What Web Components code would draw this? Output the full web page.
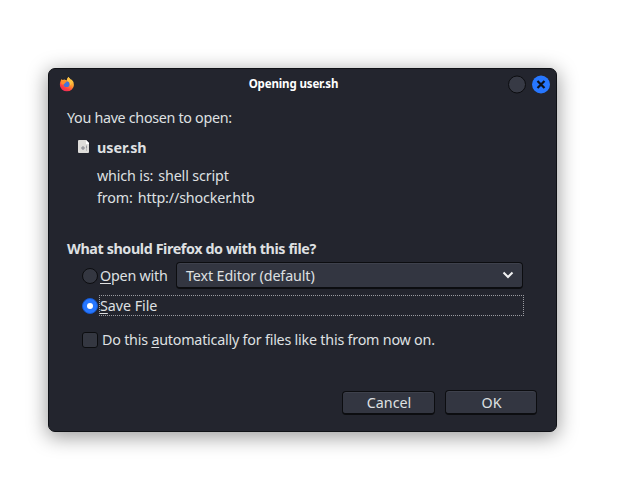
<!DOCTYPE html>
<html lang="en"><head><meta charset="utf-8"><title>Opening user.sh</title>
<style>
body{margin:0;width:625px;height:496px;overflow:hidden;background:#fff;font:14.3px/20px "Noto Sans","Open Sans",sans-serif;color:#dfe0e2}
dialog-window{margin:68px 0 0 48px}
</style></head><body>
<dialog-window heading="Opening user.sh">
<file-info name="user.sh" kind="shell script" source="http://shocker.htb"></file-info>
<open-choices></open-choices>
<dialog-actions></dialog-actions>
</dialog-window>
<script>
const define=(name,html)=>customElements.define(name,class extends HTMLElement{
 constructor(){super();const r=this.attachShadow({mode:"open"});
 r.innerHTML=html.replace(/\{\{([\w-]+)\}\}/g,(_,k)=>this.getAttribute(k)||"");}
});
define("firefox-icon",`<style>:host{display:block;width:16px;height:16px}svg{display:block}</style>
<svg width="16" height="16" viewBox="0 0 16 16"><defs><linearGradient id="f" x1=".85" y1=".05" x2=".3" y2="1"><stop stop-color="#ffe14a"/><stop offset=".45" stop-color="#ff9a2e"/><stop offset=".75" stop-color="#ff4040"/><stop offset="1" stop-color="#e8285e"/></linearGradient></defs>
<path fill="url(#f)" d="M1.500 5.500 2.200 3.200 3.800 4 5.500 3.500 7.500 4.500 9.300 1 11.500 3.600 12.800 3.800Q15.300 6 14.900 9A7 6.300 0 0 1 .9 9Q.8 6.800 1.500 5.500Z"/>
<circle cx="7.600" cy="8.200" r="2.900" fill="#4273df"/><path fill="#ff8b2b" d="M1.800 5.400 5.500 4.200 8 5.700 6.300 6.700 5 8.200 2.800 8.400Z"/><path fill="#ffc245" d="M9.300 1Q7.200 3.600 9 5 11.500 6.500 11 9.500 13.600 7.500 12.400 5L11.300 3Z"/></svg>`);
define("file-icon",`<style>:host{display:block;width:12px;height:14px}svg{display:block}</style>
<svg width="12" height="14" viewBox="0 0 12 14"><path fill="#deddda" d="M1 0H8L11 3V12Q11 13 10 13H1Q0 13 0 12V1Q0 0 1 0Z"/><path fill="#fff" d="M8 0 11 3V4H8Z"/><path d="M3 8H7M5 6V10M8.500 5.500V8.500M8.500 9.500V10.500" stroke="#999aa0" fill="none"/><circle cx="5" cy="8" r="1.500" fill="#999aa0"/></svg>`);
define("title-bar",`<style>:host{display:grid;grid-template-columns:60px 1fr 60px;align-items:center;height:30px;padding-bottom:2px;font-size:11.500px;font-weight:700;color:#fff}
firefox-icon{margin-left:10px}span{text-align:center;letter-spacing:-.14px;margin-right:18px}div{display:flex;gap:5px;justify-content:flex-end;margin-right:5px}svg{display:block}</style>
<firefox-icon></firefox-icon><span>{{heading}}</span><div>
<svg width="19" height="19" viewBox="0 0 19 19"><circle cx="9" cy="9.500" r="8.500" fill="#373a45" stroke="#0c0d10"/></svg>
<svg width="19" height="19" viewBox="0 0 19 19"><circle cx="9" cy="9.500" r="9" fill="#2777ff"/><path d="M5.500 6l7 7M12.500 6l-7 7" stroke="#0e1017" stroke-width="2.200"/></svg></div>`);
define("dialog-window",`<style>:host{display:block;box-sizing:border-box;width:509px;height:364px;border:1px solid #0f1116;border-radius:7px;background:#23252e;box-shadow:0 4px 20px 1px #0006}
main{padding:6px 18px 0}</style><title-bar heading="{{heading}}"></title-bar><main><slot></slot></main>`);
define("file-info",`<style>:host{display:block;height:131px}p{margin:0;height:22px;line-height:22px;white-space:nowrap}.name{display:flex;height:20px;margin:9px 0 7px 11px;font-weight:700;line-height:20px}file-icon{margin:2px 7px 0 0}.d{padding-left:30px;letter-spacing:-.14px}.d span+span{margin-left:5px}.t1{letter-spacing:-.3px}</style>
<p><span class="t1">You have chosen to open:</span></p><div class="name"><file-icon></file-icon><span class="t2">{{name}}</span></div>
<p class="d"><span>which is:</span><span>{{kind}}</span></p><p class="d"><span>from:</span><span>{{source}}</span></p>`);
define("radio-dot",`<style>:host{display:block;width:16px;height:16px;flex:none}svg{display:block}.on,:host([checked]) .off{display:none}:host([checked]) .on{display:block}</style>
<svg width="16" height="16" viewBox="0 0 16 16"><g class="off"><circle cx="8" cy="8" r="7.500" fill="#343741" stroke="#0c0d10"/></g><g class="on"><circle cx="8" cy="8" r="7.500" fill="#2777ff" stroke="#1658cf"/><circle cx="8" cy="8" r="3" fill="#fff"/></g></svg>`);
define("select-box",`<style>:host{display:flex;align-items:center;justify-content:space-between;box-sizing:border-box;width:347px;height:27px;border:1px solid #0c0d10;border-bottom-width:2px;border-radius:4px;background:#333641;box-shadow:inset 0 1px #3e414c;padding:0 8px 0 9px;letter-spacing:-.12px}svg{display:block}span{padding-top:1px}</style>
<span><slot></slot></span><svg width="12" height="8" viewBox="0 0 12 8"><path d="M1.500 1.500 6 6 10.500 1.500" fill="none" stroke="#f1f1f2" stroke-width="2"/></svg>`);
define("open-choices",`<style>:host{display:block;white-space:nowrap}h2{margin:0;font-size:inherit;font-weight:700;height:20px;padding-top:1px;letter-spacing:-.39px}
.row{display:flex;align-items:center;margin-left:15px}.open{height:27px;margin-top:3px}.open>span{width:76px;margin-left:2px;letter-spacing:-.2px;padding-top:1px}.save{height:21px;margin-top:6px}.save>span{box-sizing:border-box;width:425px;height:21px;line-height:20px;border:1px dotted #9a9ba0;margin-left:1px;letter-spacing:-.05px}
.auto{height:20px;margin-top:14px;letter-spacing:-.21px}.box{box-sizing:border-box;width:16px;height:16px;border:1px solid #0c0d10;border-radius:3px;background:#343741;margin-right:4px}u{text-underline-offset:2px;text-decoration-thickness:1px;text-decoration-skip-ink:none}</style>
<h2><span>What should Firefox do with this file?</span></h2>
<div class="row open"><radio-dot></radio-dot><span><u>O</u>pen with</span><select-box>Text Editor (default)</select-box></div>
<div class="row save"><radio-dot checked></radio-dot><span><u>S</u>ave File</span></div>
<div class="row auto"><div class="box"></div><span>Do this <u>a</u>utomatically for files like this from now on.</span></div>`);
define("push-button",`<style>:host{display:flex;align-items:center;justify-content:center;box-sizing:border-box;width:93px;height:24px;border:1px solid #0c0d10;border-bottom-width:2px;border-radius:4px;background:#333641;box-shadow:inset 0 1px #3e414c}span{padding:1px 0 0 1px}</style><span><slot></slot></span>`);
define("dialog-actions",`<style>:host{display:flex;justify-content:flex-end;align-items:flex-end;gap:10px;margin-top:40px;padding-right:1px;height:25px}.ok{width:92px;height:25px}</style><push-button>Cancel</push-button><push-button class="ok">OK</push-button>`);
</script></body></html>
